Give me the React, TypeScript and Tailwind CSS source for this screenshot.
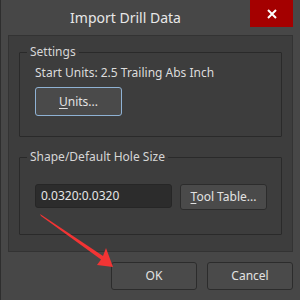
import { ReactNode } from 'react'

const font = { fontFamily: '"Noto Sans", "Open Sans", sans-serif' }

function Group({ title, children, className }: { title: string; children: ReactNode; className?: string }) {
  return (
    <fieldset className={`mx-[10px] border border-[#2a2a2a] rounded-[1px] ${className ?? ''}`}>
      <legend className="ml-[7px] px-[3px] text-[12px] leading-[16px] text-[#d6d6d6]">{title}</legend>
      {children}
    </fieldset>
  )
}

function Btn({ children, className }: { children: ReactNode; className?: string }) {
  return (
    <button
      className={`flex items-center justify-center rounded-[3px] border bg-[#4a4a4a] text-[12px] text-[#e2e2e2] ${className ?? ''}`}
    >
      {children}
    </button>
  )
}

export default function App() {
  return (
    <div
      className="relative flex h-[300px] w-[300px] flex-col overflow-hidden border-l border-[#2e2e2e] bg-[#474747]"
      style={font}
    >
      {/* title bar */}
      <div className="flex h-[35px] items-start">
        <div className="flex h-[35px] flex-1 items-center justify-center pb-[1px] text-[14px] text-[#e8e8e8]">
          Import Drill Data
        </div>
        <div className="mr-[7px] flex h-[27px] w-[43px] items-center justify-center bg-[#a40000]">
          <svg width="10" height="10" viewBox="0 0 10 10">
            <path d="M1 1 L9 9 M9 1 L1 9" stroke="#fff" strokeWidth="2" />
          </svg>
        </div>
      </div>

      {/* main panel */}
      <div className="mx-[7px] flex h-[217px] flex-col border border-[#333] bg-[#3d3d3d] pt-[8px]">
        <Group title="Settings" className="h-[93px]">
          <div className="pl-[15px] pt-[5px] text-[12px] leading-[16px] text-[#dcdcdc]">Start Units: 2.5 Trailing Abs Inch</div>
          <Btn className="ml-[15px] mt-[6px] h-[29px] w-[87px] border-[#8fb2d4]">
            <span>
              <span className="underline underline-offset-2">U</span>nits...
            </span>
          </Btn>
        </Group>
        <Group title="Shape/Default Hole Size" className="mt-[12px] h-[86px]">
          <div className="flex items-start gap-[8px] pl-[15px] pt-[19px]">
            <div className="flex h-[24px] w-[137px] items-center rounded-[3px] border border-[#262626] bg-[#2c2c2c] pl-[5px] text-[12px] text-[#e6e6e6]">
              0.0320:0.0320
            </div>
            <Btn className="h-[26px] w-[87px] border-[#2c2c2c]">
              <span>
                <span className="underline underline-offset-2">T</span>ool Table...
              </span>
            </Btn>
          </div>
        </Group>
      </div>

      {/* footer */}
      <div className="flex justify-end gap-[10px] pr-[7px] pt-[10px]">
        <Btn className="h-[28px] w-[86px] border-[#2c2c2c]">OK</Btn>
        <Btn className="h-[28px] w-[86px] border-[#2c2c2c]">Cancel</Btn>
      </div>

      {/* annotation arrow */}
      <svg className="pointer-events-none absolute left-0 top-0" width="300" height="300">
        <polygon points="39,214 102,256 105,248 112,267 96,265 100,259.5 40,216" fill="#f23434" />
      </svg>
    </div>
  )
}
